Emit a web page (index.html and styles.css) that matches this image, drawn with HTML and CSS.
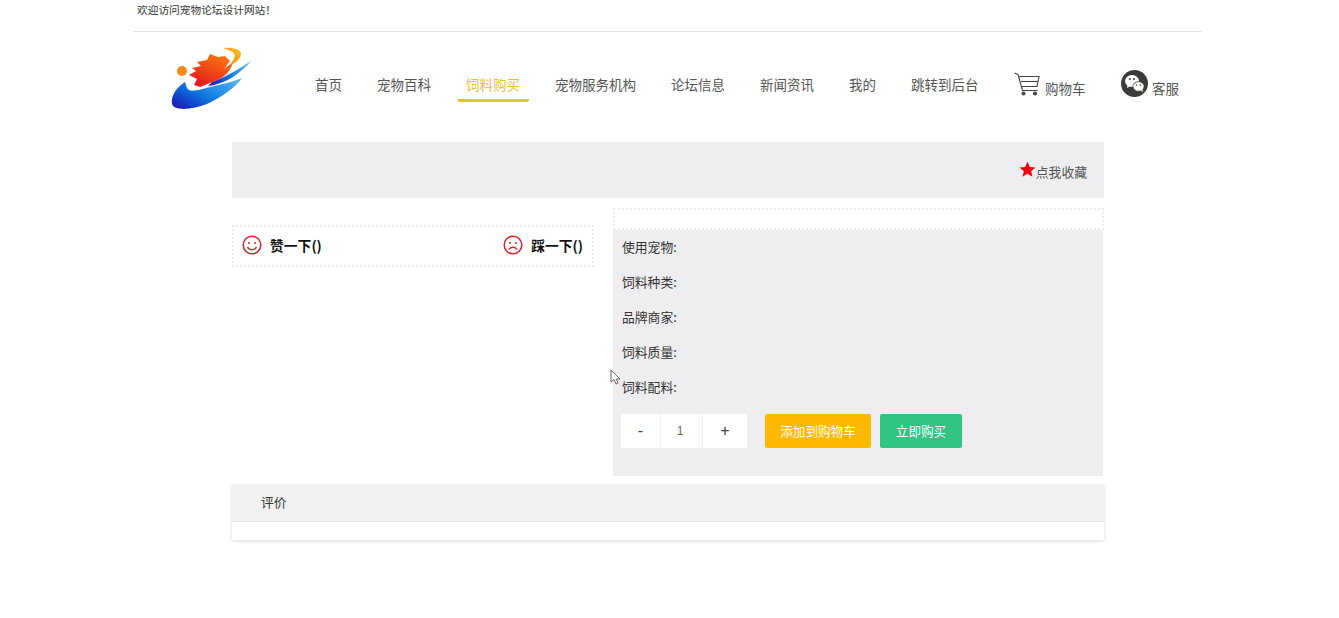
FILE: index.html
```html
<!DOCTYPE html>
<html lang="zh-CN">
<head>
<meta charset="utf-8">
<title>饲料购买</title>
<link rel="stylesheet" href="styles.css">
</head>
<body>
<div class="page">
  <div class="topbar">欢迎访问宠物论坛设计网站！</div>
  <header class="header">
    <svg class="logo" viewBox="0 0 100 75" aria-label="logo">
      <defs>
        <linearGradient id="blue" x1="0" y1="1" x2="1" y2="0.2">
          <stop offset="0" stop-color="#2a0fa8"/>
          <stop offset="0.2" stop-color="#1238c8"/>
          <stop offset="0.5" stop-color="#0f7be0"/>
          <stop offset="1" stop-color="#4db4f2"/>
        </linearGradient>
        <linearGradient id="red" x1="0.2" y1="1" x2="0.8" y2="0">
          <stop offset="0" stop-color="#e6141e"/>
          <stop offset="1" stop-color="#fb7a10"/>
        </linearGradient>
        <linearGradient id="gold" x1="0" y1="1" x2="1" y2="0">
          <stop offset="0" stop-color="#f57a14"/>
          <stop offset="1" stop-color="#fbc21c"/>
        </linearGradient>
      </defs>
      <circle cx="22" cy="31" r="5" fill="#f58a1f"/>
      <path fill="url(#blue)" d="M25 42C14 49 11 58 12 64C14 71 32 70 47 64C60 58 75 48 82 38C72 42 62 44 50 47C42 49 33 52 29 50C26 48 26 44 25 42Z"/>
      <path fill="url(#blue)" d="M91 21C80 28 68 36 52 42L48 46C65 44 80 34 91 21Z"/>
      <path fill="url(#red)" d="M37 22L47 20L50 14L58 17L65 16L70 21L64 29L73 22C71 32 63 38 55 41L40 47L34 45L37 39L29 35L36 31L32 28L41 26Z"/>
      <path fill="url(#gold)" d="M63 8C72 7 81 9 81 14C81 19 75 23 69 26C73 21 76 17 74 13C72 11 68 10 63 8Z"/>
    </svg>
    <nav class="nav">
      <a class="nav-link">首页</a>
      <a class="nav-link">宠物百科</a>
      <a class="nav-link active">饲料购买</a>
      <a class="nav-link">宠物服务机构</a>
      <a class="nav-link">论坛信息</a>
      <a class="nav-link">新闻资讯</a>
      <a class="nav-link">我的</a>
      <a class="nav-link">跳转到后台</a>
      <a class="nav-tool">
        <svg class="cart-icon" viewBox="0 0 26 24" fill="none" stroke="#444" stroke-width="1.1">
          <path d="M0.5 1L4 2.5L8.5 18.5H23.5"/>
          <path d="M5 4.5H25L23 14.5H7.5"/>
          <path d="M7 9.5H24"/>
          <circle cx="9.5" cy="21.5" r="1.5" fill="#444"/>
          <circle cx="21" cy="21.5" r="1.5" fill="#444"/>
        </svg>
        <span>购物车</span>
      </a>
      <a class="nav-tool">
        <svg class="wechat-icon" viewBox="0 0 27 27">
          <circle cx="13.5" cy="13.5" r="13.5" fill="#3e3a39"/>
          <ellipse cx="11" cy="11" rx="7" ry="6" fill="#fff"/>
          <path d="M6.5 14.5L6 18L9.5 16Z" fill="#fff"/>
          <ellipse cx="17.5" cy="16.5" rx="5.6" ry="4.8" fill="#fff" stroke="#3e3a39" stroke-width="0.8"/>
          <path d="M20 20L21.5 22.5L21.8 19.5Z" fill="#fff"/>
          <circle cx="8.8" cy="9" r="1" fill="#3e3a39"/>
          <circle cx="13" cy="9" r="1" fill="#3e3a39"/>
          <circle cx="15.6" cy="15" r="0.8" fill="#3e3a39"/>
          <circle cx="19.4" cy="15" r="0.8" fill="#3e3a39"/>
        </svg>
        <span>客服</span>
      </a>
    </nav>
  </header>

  <main class="main">
    <div class="favorite-bar">
      <svg class="star" viewBox="0 0 24 24"><path fill="#f0000f" d="M12 1l3.2 7.4 8 .7-6 5.3 1.8 7.9L12 18.1l-7 4.2 1.8-7.9-6-5.3 8-.7z"/></svg>
      <span>点我收藏</span>
    </div>

    <div class="detail">
      <div class="left-col">
        <div class="vote-box">
          <div class="vote">
            <svg class="face" viewBox="0 0 20 20" fill="none" stroke="#d5232f" stroke-width="1.5">
              <circle cx="10" cy="10" r="8.8"/>
              <circle cx="7" cy="8" r="1" fill="#d5232f" stroke="none"/>
              <circle cx="13" cy="8" r="1" fill="#d5232f" stroke="none"/>
              <path d="M5.5 12C7 15.5 13 15.5 14.5 12"/>
            </svg>
            <span>赞一下()</span>
          </div>
          <div class="vote">
            <svg class="face" viewBox="0 0 20 20" fill="none" stroke="#d5232f" stroke-width="1.5">
              <circle cx="10" cy="10" r="8.8"/>
              <circle cx="7" cy="8" r="1" fill="#d5232f" stroke="none"/>
              <circle cx="13" cy="8" r="1" fill="#d5232f" stroke="none"/>
              <path d="M6 14.5C7.5 11.5 12.5 11.5 14 14.5"/>
            </svg>
            <span>踩一下()</span>
          </div>
        </div>
      </div>

      <div class="right-col">
        <div class="title-box"></div>
        <div class="info-panel">
          <p class="info-row">使用宠物:</p>
          <p class="info-row">饲料种类:</p>
          <p class="info-row">品牌商家:</p>
          <p class="info-row">饲料质量:</p>
          <p class="info-row">饲料配料:</p>
          <div class="actions">
            <div class="qty">
              <span class="qty-btn minus">-</span>
              <span class="qty-value">1</span>
              <span class="qty-btn plus">+</span>
            </div>
            <a class="btn btn-cart">添加到购物车</a>
            <a class="btn btn-buy">立即购买</a>
          </div>
        </div>
      </div>
    </div>

    <section class="review">
      <div class="review-head">评价</div>
      <div class="review-body"></div>
    </section>
  </main>
</div>
<svg class="cursor" viewBox="0 0 11 16"><path d="M1 1V13L4 10.5L6 15L8 14L6 10H10Z" fill="#fff" stroke="#444" stroke-width="0.8"/></svg>
</body>
</html>
```
FILE: styles.css
```css
* { box-sizing: border-box; }
html, body { margin: 0; padding: 0; background: #fff; overflow: hidden; }
body {
  height: 618px;
  font-family: "Noto Sans CJK SC", "Liberation Sans", sans-serif;
  color: #333;
}
.page { width: 1069px; margin-left: 133px; }

.topbar {
  height: 32px;
  border-bottom: 1px solid #e2e2e2;
  padding: 2px 0 0 4px;
  font-size: 10.7px;
  line-height: 15px;
  color: #333;
}

.header {
  display: flex;
  align-items: flex-start;
  height: 110px;
  padding: 8px 0 0 27px;
}
.logo { width: 100px; height: 75px; flex: none; }
.nav {
  display: flex;
  align-items: flex-end;
  gap: 18px;
  margin: 30px 0 0 46.5px;
  font-size: 13.5px;
  color: #555;
  white-space: nowrap;
}
.nav-link {
  padding: 0 8.5px 2px;
  line-height: 26px;
  border-bottom: 3px solid transparent;
  border-radius: 2px;
}
.nav-link.active { color: #f0bc3a; border-bottom-color: #f4bd2a; }
.nav-tool {
  display: flex;
  align-items: flex-end;
  padding: 0 8.5px 0 9px;
  margin-bottom: 1px;
  line-height: 26px;
}
.cart-icon { width: 26px; height: 24px; margin: 0 5px 5px 0; }
.wechat-icon { width: 27px; height: 27px; margin: 0 4px 4px 0; }

.main { width: 872px; margin-left: 99px; }
.favorite-bar {
  display: flex;
  align-items: center;
  justify-content: flex-end;
  height: 56px;
  padding: 3px 17px 0 0;
  background: #eeeef0;
  font-size: 12.8px;
  color: #555;
}
.star { width: 17px; height: 17px; margin: -4px 0 0 0; }

.detail { display: flex; gap: 19px; margin-top: 10px; }
.left-col { width: 362px; padding-top: 17px; }
.right-col { width: 491px; }
.vote-box {
  display: flex;
  justify-content: space-between;
  align-items: center;
  height: 42px;
  padding: 0 9px 2px 8px;
  border: 2px dotted #ececec;
  font-size: 13.8px;
  font-weight: 700;
  color: #111;
}
.vote { display: flex; align-items: center; gap: 8px; }
.face { width: 20px; height: 20px; }

.title-box {
  height: 22px;
  border: 2px dotted #ececec;
}
.info-panel {
  height: 246px;
  margin-right: 1px;
  padding: 0 8px 0 9px;
  background: #eeeef0;
}
.info-row {
  margin: 0;
  height: 35px;
  line-height: 33px;
  font-size: 12.8px;
  color: #333;
}
.actions { display: flex; align-items: center; margin-top: 9px; margin-left: -1px; }
.qty {
  display: flex;
  width: 126px;
  height: 34px;
  margin-right: 18px;
  background: #fff;
  font-family: "Liberation Sans", sans-serif;
  color: #444;
}
.qty-btn, .qty-value {
  display: flex;
  align-items: center;
  justify-content: center;
}
.qty-btn { font-size: 16px; }
.minus { width: 39px; }
.qty-value { width: 43px; padding-right: 3px; font-size: 12px; color: #666; border-left: 1px solid #f0f0f0; border-right: 1px solid #f0f0f0; }
.plus { width: 44px; }
.btn {
  display: flex;
  align-items: center;
  justify-content: center;
  height: 34px;
  padding-bottom: 2px;
  border-radius: 2px;
  font-size: 12.6px;
  color: #fff;
}
.btn-cart { width: 106px; margin-right: 9px; background: #ffb800; }
.btn-buy { width: 82px; background: #2fc481; }

.review {
  margin-top: 9px;
  box-shadow: 0 1px 4px rgba(0, 0, 0, 0.16);
  background: #fff;
}
.review-head {
  height: 37px;
  padding-left: 29px;
  line-height: 34px;
  background: #f2f2f2;
  border-bottom: 1px solid #e6e6e6;
  font-size: 12.8px;
  color: #333;
}
.review-body { height: 18px; }

.cursor {
  position: absolute;
  left: 610px;
  top: 369px;
  width: 11px;
  height: 16px;
}
```
